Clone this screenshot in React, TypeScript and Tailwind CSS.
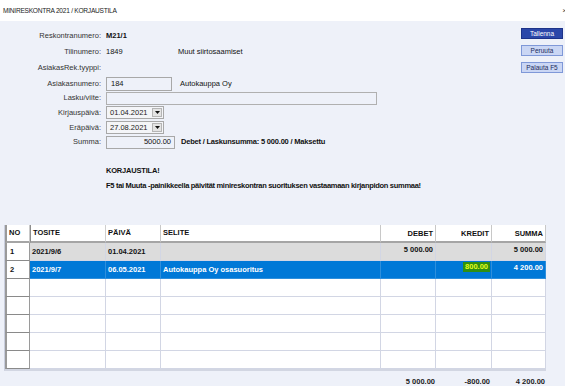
import React from "react";

const FONT = { fontFamily: '"Liberation Sans", Arial, sans-serif' };

function Label({ children }: { children: React.ReactNode }) {
  return <div className="w-[101px] text-right pr-[0px] text-[#333] shrink-0">{children}</div>;
}

function DateBox({ value }: { value: string }) {
  return (
    <div className="ml-[5px] w-[58px] h-[13px] border border-[#a8a8a8] bg-[#f4f5f8] flex items-center justify-between pl-[3px] pr-[1px]">
      <span className="text-[#222]">{value}</span>
      <div className="w-[10px] h-[9px] bg-[#e4e4e4] border border-[#b5b5b5] flex items-center justify-center">
        <svg width="5" height="3" viewBox="0 0 5 3"><path d="M0 0h5L2.5 3z" fill="#111" /></svg>
      </div>
    </div>
  );
}

type Row = { no: string; tosite: string; paiva: string; selite: string; debet: string; kredit: string; summa: string; kind: "gray" | "blue" | "empty" };

const rows: Row[] = [
  { no: "1", tosite: "2021/9/6", paiva: "01.04.2021", selite: "", debet: "5 000.00", kredit: "", summa: "5 000.00", kind: "gray" },
  { no: "2", tosite: "2021/9/7", paiva: "06.05.2021", selite: "Autokauppa Oy osasuoritus", debet: "", kredit: "800.00", summa: "4 200.00", kind: "blue" },
  ...Array.from({ length: 5 }, () => ({ no: "", tosite: "", paiva: "", selite: "", debet: "", kredit: "", summa: "", kind: "empty" as const })),
];

export default function App() {
  return (
    <div className="w-[565px] h-[386px] bg-[#eef1f9] flex flex-col overflow-hidden text-[7.5px] text-[#111]" style={FONT}>
      <div className="h-[21px] bg-white flex items-center justify-between pl-[3px] shrink-0">
        <span className="text-[6.6px] tracking-[-0.25px] text-[#222]">MINIRESKONTRA 2021 / KORJAUSTILA</span>
        <span className="text-[8px] text-[#444] mr-[-2px]">×</span>
      </div>

      <div className="flex flex-1">
        <div className="flex flex-col flex-1">
          <div className="flex flex-col pt-[7px]">
            <div className="flex items-center h-[16px]">
              <Label>Reskontranumero:</Label>
              <span className="ml-[5px] font-bold">M21/1</span>
            </div>
            <div className="flex items-center h-[16px]">
              <Label>Tilinumero:</Label>
              <span className="ml-[5px] w-[72px]">1849</span>
              <span>Muut siirtosaamiset</span>
            </div>
            <div className="flex items-center h-[16px]">
              <Label>AsiakasRek.tyyppi:</Label>
            </div>
            <div className="flex items-center h-[15px]">
              <Label>Asiakasnumero:</Label>
              <div className="ml-[5px] w-[66px] h-[14px] border border-[#a8a8a8] flex items-center pl-[4px]">184</div>
              <span className="ml-[8px]">Autokauppa Oy</span>
            </div>
            <div className="flex items-center h-[14px]">
              <Label>Lasku/viite:</Label>
              <div className="ml-[5px] w-[271px] h-[13px] border border-[#b0b0b0]" />
            </div>
            <div className="flex items-center h-[15px]">
              <Label>Kirjauspäivä:</Label>
              <DateBox value="01.04.2021" />
            </div>
            <div className="flex items-center h-[15px]">
              <Label>Eräpäivä:</Label>
              <DateBox value="27.08.2021" />
            </div>
            <div className="flex items-center h-[14px]">
              <Label>Summa:</Label>
              <div className="ml-[5px] w-[69px] h-[13px] border border-[#a8a8a8] flex items-center justify-end pr-[3px]">5000.00</div>
              <span className="ml-[6px] font-bold tracking-[-0.2px]">Debet / Laskunsumma: 5 000.00 / Maksettu</span>
            </div>
          </div>
          <div className="pl-[106px] mt-[16px] h-[12px] flex items-center font-bold tracking-[-0.2px]">KORJAUSTILA!</div>
          <div className="pl-[106px] mt-[3px] h-[12px] flex items-center font-bold tracking-[-0.3px] whitespace-nowrap">
            F5 tai Muuta -painikkeella päivität minireskontran suorituksen vastaamaan kirjanpidon summaa!
          </div>
        </div>
        <div className="flex flex-col gap-[6px] pt-[7px] pr-[1px] w-[44px] shrink-0">
          <div className="w-[42px] h-[11px] bg-[#2b47a9] border border-[#1d3389] text-white text-[6.5px] flex items-center justify-center">Tallenna</div>
          <div className="w-[42px] h-[11px] bg-[#cad6f4] border border-[#7f98d8] text-[#1c2b5c] text-[6.5px] flex items-center justify-center">Peruuta</div>
          <div className="w-[42px] h-[11px] bg-[#cad6f4] border border-[#7f98d8] text-[#1c2b5c] text-[6.5px] flex items-center justify-center">Palauta F5</div>
        </div>
      </div>

      <div className="ml-[4px] mt-[33px] w-[542px] border-l border-[#c9cede] border-b-2 border-b-[#d2d6e2] bg-white shrink-0">
        <div className="flex h-[18px] font-bold text-[#111]">
          <div className="w-[25px] border-l-2 border-l-[#9a9a9a] border-r border-r-[#c8c8c8] border-b-2 border-b-[#a5a5a5] pl-[2px] flex items-center">NO</div>
          <div className="w-[76px] border-l border-l-[#8d8d8d] border-r border-r-[#cfcfcf] border-b-2 border-b-[#a5a5a5] pl-[2px] flex items-center">TOSITE</div>
          <div className="w-[55px] border-r border-r-[#c8c8c8] border-b-2 border-b-[#a5a5a5] pl-[2px] flex items-center">PÄIVÄ</div>
          <div className="w-[220px] border-r border-r-[#c8c8c8] border-b-2 border-b-[#a5a5a5] pl-[2px] flex items-center">SELITE</div>
          <div className="w-[55px] border-r border-r-[#c8c8c8] border-b-2 border-b-[#a5a5a5] pr-[2px] pt-[3px] text-right">DEBET</div>
          <div className="w-[56px] border-r border-r-[#c8c8c8] border-b-2 border-b-[#a5a5a5] pr-[2px] pt-[3px] text-right">KREDIT</div>
          <div className="w-[54px] border-r border-r-[#c8c8c8] border-b-2 border-b-[#a5a5a5] pr-[2px] pt-[3px] text-right">SUMMA</div>
        </div>
        {rows.map((r, i) => {
          const bg = r.kind === "gray" ? "bg-[#dcdcdc] text-[#111]" : r.kind === "blue" ? "bg-[#0078d7] text-white" : "bg-white";
          const cellB = r.kind === "blue" ? "border-[#2f8fdc]" : "border-[#d2d6e4]";
          return (
            <div key={i} className="flex h-[18px] font-bold">
              <div className="w-[25px] bg-white border-l-2 border-l-[#9a9a9a] border-r border-r-[#9a9a9a] border-b border-b-[#8a8a8a] pl-[3px] flex items-center text-[#111]">{r.no}</div>
              <div className={`w-[76px] ${bg} border-r border-b ${cellB} pl-[2px] flex items-center`}>{r.tosite}</div>
              <div className={`w-[55px] ${bg} border-r border-b ${cellB} pl-[2px] flex items-center`}>{r.paiva}</div>
              <div className={`w-[220px] ${bg} border-r border-b ${cellB} pl-[2px] flex items-center`}>{r.selite}</div>
              <div className={`w-[55px] ${bg} border-r border-b ${cellB} pr-[2px] pt-[1px] text-right`}>{r.debet}</div>
              <div className={`w-[56px] ${bg} border-r border-b ${cellB} pr-[1px] pt-[1px] flex justify-end items-start`}>
                {r.kredit && <span className="bg-[#2f8f12] text-[#e6ff1a] px-[2px] leading-[10px]">{r.kredit}</span>}
              </div>
              <div className={`w-[54px] ${bg} border-r border-b ${cellB} pr-[2px] pt-[1px] text-right`}>{r.summa}</div>
            </div>
          );
        })}
      </div>

      <div className="ml-[4px] mt-[5px] flex font-bold text-[#222]">
        <div className="w-[376px]" />
        <div className="w-[55px] text-right">5 000.00</div>
        <div className="w-[55px] text-right">-800.00</div>
        <div className="w-[55px] text-right">4 200.00</div>
      </div>
    </div>
  );
}
